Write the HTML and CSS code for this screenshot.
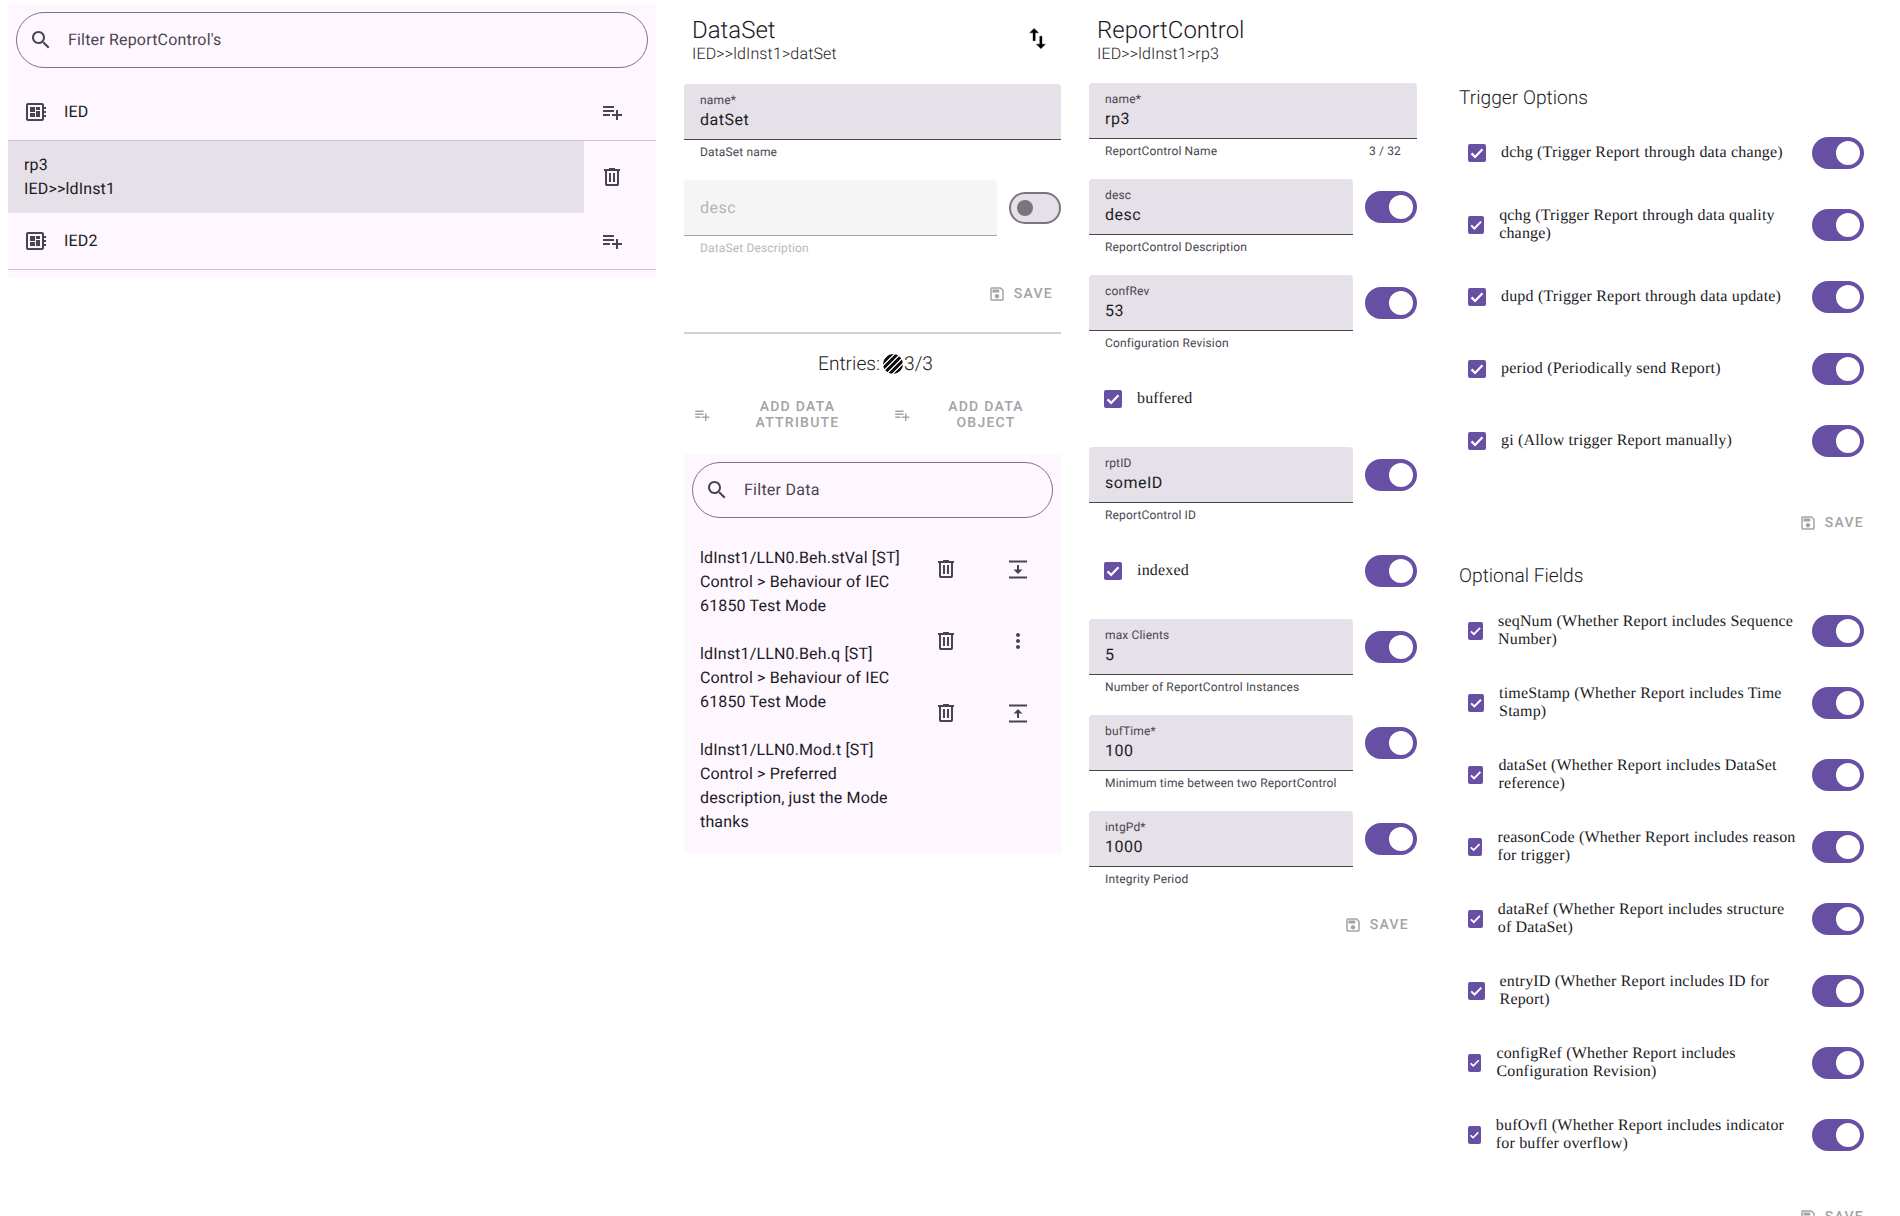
FILE: index.html
```html
<!DOCTYPE html>
<html lang="en">
<head>
<meta charset="UTF-8">
<meta name="viewport" content="width=device-width, initial-scale=1.0">
<title>ReportControl</title>
<link rel="stylesheet" href="styles.css">
</head>
<body>
<svg class="sprite" xmlns="http://www.w3.org/2000/svg">
    <symbol id="i-search" viewBox="0 0 24 24"><path d="M15.5 14h-.79l-.28-.27C15.41 12.59 16 11.11 16 9.5 16 5.91 13.09 3 9.5 3S3 5.91 3 9.5 5.91 16 9.5 16c1.61 0 3.09-.59 4.23-1.57l.27.28v.79l5 4.99L20.49 19l-4.99-5zm-6 0C7.01 14 5 11.99 5 9.5S7.01 5 9.5 5 14 7.01 14 9.5 11.99 14 9.5 14z"/></symbol>
    <symbol id="i-board" viewBox="0 0 24 24"><path d="M22 9V7h-2V5c0-1.1-.9-2-2-2H4c-1.1 0-2 .9-2 2v14c0 1.1.9 2 2 2h14c1.1 0 2-.9 2-2v-2h2v-2h-2v-2h2v-2h-2V9h2zm-4 10H4V5h14v14zM6 13h5v4H6zm6-6h4v3h-4zM6 7h5v5H6zm6 4h4v6h-4z"/></symbol>
    <symbol id="i-add" viewBox="0 0 24 24"><path d="M14 10H3v2h11v-2zm0-4H3v2h11V6zm4 8v-4h-2v4h-4v2h4v4h2v-4h4v-2h-4zM3 16h7v-2H3v2z"/></symbol>
    <symbol id="i-delete" viewBox="0 0 24 24"><path d="M7 21q-.825 0-1.412-.587Q5 19.825 5 19V6H4V4h5V3h6v1h5v2h-1v13q0 .825-.587 1.413Q17.825 21 17 21ZM17 6H7v13h10ZM9 17h2V8H9Zm4 0h2V8h-2Z"/></symbol>
    <symbol id="i-save" viewBox="0 0 24 24"><path d="M17 3H5c-1.11 0-2 .9-2 2v14c0 1.1.89 2 2 2h14c1.1 0 2-.9 2-2V7l-4-4zm2 16H5V5h11.17L19 7.83V19zm-7-7c-1.66 0-3 1.34-3 3s1.34 3 3 3 3-1.34 3-3-1.34-3-3-3zM6 6h9v4H6z"/></symbol>
    <symbol id="i-swap" viewBox="0 0 24 24"><path d="M16 17.01V10h-2v7.01h-3L15 21l4-3.99h-3zM9 3L5 6.99h3V14h2V6.99h3L9 3z"/></symbol>
    <symbol id="i-down" viewBox="0 0 24 24"><path d="M3 3.5h18v2H3zM3 19.5h18v2H3zM11 8h2v4.5h3.5L12 17l-4.5-4.5H11z"/></symbol>
    <symbol id="i-up" viewBox="0 0 24 24"><path d="M3 3.5h18v2H3zM3 19.5h18v2H3zM11 17h2v-4.5h3.5L12 8l-4.5 4.5H11z"/></symbol>
    <symbol id="i-more" viewBox="0 0 24 24"><path d="M12 8c1.1 0 2-.9 2-2s-.9-2-2-2-2 .9-2 2 .9 2 2 2zm0 2c-1.1 0-2 .9-2 2s.9 2 2 2 2-.9 2-2-.9-2-2-2zm0 6c-1.1 0-2 .9-2 2s.9 2 2 2 2-.9 2-2-.9-2-2-2z"/></symbol>
    <symbol id="i-check" viewBox="0 0 18 18"><path d="M3.5 9.4l3.6 3.5 7.4-7.6" fill="none" stroke="#fff" stroke-width="2.2"/></symbol>
</svg>

<div class="page">

    <!-- report control tree -->
    <section class="tree-col">
        <div class="panel">
            <div class="search">
                <svg class="icon"><use href="#i-search"/></svg>
                <span>Filter ReportControl's</span>
            </div>
            <div class="tree">
                <div class="tree-row">
                    <svg class="icon"><use href="#i-board"/></svg>
                    <span class="tree-name">IED</span>
                    <svg class="icon tree-action"><use href="#i-add"/></svg>
                </div>
                <div class="tree-row tree-row-sel">
                    <div class="tree-sel">rp3<br>IED&gt;&gt;ldInst1</div>
                    <svg class="icon tree-action"><use href="#i-delete"/></svg>
                </div>
                <div class="tree-row">
                    <svg class="icon"><use href="#i-board"/></svg>
                    <span class="tree-name">IED2</span>
                    <svg class="icon tree-action"><use href="#i-add"/></svg>
                </div>
            </div>
        </div>
    </section>

    <!-- dataset -->
    <section class="dataset-col">
        <header class="col-head">
            <div>
                <h1>DataSet</h1>
                <p>IED&gt;&gt;ldInst1&gt;datSet</p>
            </div>
            <svg class="icon swap"><use href="#i-swap"/></svg>
        </header>

        <div class="field-row">
            <div class="field">
                <div class="box"><span class="box-label">name*</span><span class="box-value">datSet</span></div>
                <div class="helper"><span>DataSet name</span></div>
            </div>
        </div>
        <div class="field-row">
            <div class="field field-off">
                <div class="box box-empty"><span class="box-value">desc</span></div>
                <div class="helper"><span>DataSet Description</span></div>
            </div>
            <span class="switch switch-off"></span>
        </div>

        <div class="save-row">
            <span class="save"><svg class="icon-sm"><use href="#i-save"/></svg>Save</span>
        </div>

        <hr class="rule">
        <div class="entries">Entries:<span class="hatch"></span>3/3</div>

        <div class="add-row">
            <div class="add-btn add-btn-first"><svg class="icon-sm"><use href="#i-add"/></svg><span>Add data<br>attribute</span></div>
            <div class="add-btn"><svg class="icon-sm"><use href="#i-add"/></svg><span>Add data<br>object</span></div>
        </div>

        <div class="panel data-panel">
            <div class="search">
                <svg class="icon"><use href="#i-search"/></svg>
                <span>Filter Data</span>
            </div>
            <div class="data-list">
                <div class="data-text">
                    <p>ldInst1/LLN0.Beh.stVal [ST]<br>Control &gt; Behaviour of IEC 61850 Test Mode</p>
                    <p>ldInst1/LLN0.Beh.q [ST]<br>Control &gt; Behaviour of IEC 61850 Test Mode</p>
                    <p>ldInst1/LLN0.Mod.t [ST]<br>Control &gt; Preferred description, just the Mode thanks</p>
                </div>
                <div class="data-actions">
                    <svg class="icon"><use href="#i-delete"/></svg>
                    <svg class="icon"><use href="#i-down"/></svg>
                    <svg class="icon"><use href="#i-delete"/></svg>
                    <svg class="icon"><use href="#i-more"/></svg>
                    <svg class="icon"><use href="#i-delete"/></svg>
                    <svg class="icon"><use href="#i-up"/></svg>
                </div>
            </div>
        </div>
    </section>

    <!-- report control attributes -->
    <section class="report-col">
        <header class="col-head col-head-report">
            <div>
                <h1>ReportControl</h1>
                <p>IED&gt;&gt;ldInst1&gt;rp3</p>
            </div>
        </header>

        <div class="field-row">
            <div class="field">
                <div class="box"><span class="box-label">name*</span><span class="box-value">rp3</span></div>
                <div class="helper"><span>ReportControl Name</span><span>3 / 32</span></div>
            </div>
        </div>
        <div class="field-row">
            <div class="field">
                <div class="box"><span class="box-label">desc</span><span class="box-value">desc</span></div>
                <div class="helper"><span>ReportControl Description</span></div>
            </div>
            <span class="switch"></span>
        </div>
        <div class="field-row">
            <div class="field">
                <div class="box"><span class="box-label">confRev</span><span class="box-value">53</span></div>
                <div class="helper"><span>Configuration Revision</span></div>
            </div>
            <span class="switch"></span>
        </div>
        <div class="check-row">
            <label class="form-field"><span class="checkbox"><svg><use href="#i-check"/></svg></span><span class="form-label">buffered</span></label>
        </div>
        <div class="field-row">
            <div class="field">
                <div class="box"><span class="box-label">rptID</span><span class="box-value">someID</span></div>
                <div class="helper"><span>ReportControl ID</span></div>
            </div>
            <span class="switch"></span>
        </div>
        <div class="check-row">
            <label class="form-field"><span class="checkbox"><svg><use href="#i-check"/></svg></span><span class="form-label">indexed</span></label>
            <span class="switch"></span>
        </div>
        <div class="field-row">
            <div class="field">
                <div class="box"><span class="box-label">max Clients</span><span class="box-value">5</span></div>
                <div class="helper"><span>Number of ReportControl Instances</span></div>
            </div>
            <span class="switch"></span>
        </div>
        <div class="field-row">
            <div class="field">
                <div class="box"><span class="box-label">bufTime*</span><span class="box-value">100</span></div>
                <div class="helper"><span>Minimum time between two ReportControl</span></div>
            </div>
            <span class="switch"></span>
        </div>
        <div class="field-row">
            <div class="field">
                <div class="box"><span class="box-label">intgPd*</span><span class="box-value">1000</span></div>
                <div class="helper"><span>Integrity Period</span></div>
            </div>
            <span class="switch"></span>
        </div>
        <div class="save-row">
            <span class="save"><svg class="icon-sm"><use href="#i-save"/></svg>Save</span>
        </div>
    </section>

    <!-- trigger options and optional fields -->
    <section class="options-col">
        <h2 class="first">Trigger Options</h2>
        <div class="opt-row"><label class="form-field"><span class="checkbox"><svg><use href="#i-check"/></svg></span><span class="form-label">dchg (Trigger Report through data change)</span></label><span class="switch"></span></div>
        <div class="opt-row"><label class="form-field"><span class="checkbox"><svg><use href="#i-check"/></svg></span><span class="form-label">qchg (Trigger Report through data quality change)</span></label><span class="switch"></span></div>
        <div class="opt-row"><label class="form-field"><span class="checkbox"><svg><use href="#i-check"/></svg></span><span class="form-label">dupd (Trigger Report through data update)</span></label><span class="switch"></span></div>
        <div class="opt-row"><label class="form-field"><span class="checkbox"><svg><use href="#i-check"/></svg></span><span class="form-label">period (Periodically send Report)</span></label><span class="switch"></span></div>
        <div class="opt-row"><label class="form-field"><span class="checkbox"><svg><use href="#i-check"/></svg></span><span class="form-label">gi (Allow trigger Report manually)</span></label><span class="switch"></span></div>
        <div class="save-row opt-save">
            <span class="save"><svg class="icon-sm"><use href="#i-save"/></svg>Save</span>
        </div>

        <h2>Optional Fields</h2>
        <div class="opt-row"><label class="form-field"><span class="checkbox"><svg><use href="#i-check"/></svg></span><span class="form-label">seqNum (Whether Report includes Sequence Number)</span></label><span class="switch"></span></div>
        <div class="opt-row"><label class="form-field"><span class="checkbox"><svg><use href="#i-check"/></svg></span><span class="form-label">timeStamp (Whether Report includes Time Stamp)</span></label><span class="switch"></span></div>
        <div class="opt-row"><label class="form-field"><span class="checkbox"><svg><use href="#i-check"/></svg></span><span class="form-label">dataSet (Whether Report includes DataSet reference)</span></label><span class="switch"></span></div>
        <div class="opt-row"><label class="form-field"><span class="checkbox"><svg><use href="#i-check"/></svg></span><span class="form-label">reasonCode (Whether Report includes reason for trigger)</span></label><span class="switch"></span></div>
        <div class="opt-row"><label class="form-field"><span class="checkbox"><svg><use href="#i-check"/></svg></span><span class="form-label">dataRef (Whether Report includes structure of DataSet)</span></label><span class="switch"></span></div>
        <div class="opt-row"><label class="form-field"><span class="checkbox"><svg><use href="#i-check"/></svg></span><span class="form-label">entryID (Whether Report includes ID for Report)</span></label><span class="switch"></span></div>
        <div class="opt-row"><label class="form-field"><span class="checkbox"><svg><use href="#i-check"/></svg></span><span class="form-label">configRef (Whether Report includes Configuration Revision)</span></label><span class="switch"></span></div>
        <div class="opt-row"><label class="form-field"><span class="checkbox"><svg><use href="#i-check"/></svg></span><span class="form-label">bufOvfl (Whether Report includes indicator for buffer overflow)</span></label><span class="switch"></span></div>
        <div class="save-row opt-save">
            <span class="save"><svg class="icon-sm"><use href="#i-save"/></svg>Save</span>
        </div>
    </section>

</div>
</body>
</html>
```

FILE: styles.css
```css
html{
overflow: hidden;
}

body{
margin: 0;
background: #fff;
color: #1c1b1f;
font-family: Roboto, "Liberation Sans", sans-serif;
font-size: 16px;
line-height: 24px;
letter-spacing: 0.15px;
text-rendering: geometricPrecision;
}

.sprite{
display: none;
}

.page{
display: flex;
align-items: flex-start;
padding: 4px 0 0 8px;
}

.icon{
width: 24px;
height: 24px;
flex: none;
fill: #49454f;
}

.icon-sm{
width: 18px;
height: 18px;
flex: none;
fill: currentColor;
}

/* columns */
.tree-col{
width: 648px;
flex: none;
}

.dataset-col{
width: 377px;
flex: none;
margin-left: 28px;
}

.report-col{
width: 328px;
flex: none;
margin-left: 28px;
}

.options-col{
width: 406px;
flex: none;
margin-left: 41px;
}

/* panels and search */
.panel{
background: #fef7ff;
padding: 8px;
}

.search{
height: 56px;
box-sizing: border-box;
display: flex;
align-items: center;
gap: 15px;
padding-left: 12px;
border: 1px solid #79747e;
border-radius: 28px;
color: #49454f;
letter-spacing: 0.25px;
}

.tree-col .panel{
padding: 8px 0;
}

.tree-col .search{
margin: 0 8px;
letter-spacing: 0.18px;
}

/* tree */
.tree{
padding-top: 16px;
}

.tree-row{
height: 57px;
box-sizing: border-box;
display: flex;
align-items: center;
gap: 16px;
padding: 0 32px 0 16px;
border-bottom: 1px solid #cac4d0;
}

.tree-name{
flex: 1;
}

.tree-row-sel{
height: 72px;
padding: 0 32px 0 0;
border-bottom: none;
}

.tree-sel{
width: 576px;
height: 72px;
box-sizing: border-box;
padding: 12px 0 0 16px;
background: #e6e1e8;
}

.tree-action{
margin: -1px 0 0 auto;
}

/* column header */
.col-head{
height: 60px;
box-sizing: border-box;
display: flex;
justify-content: space-between;
align-items: center;
padding: 10px 10px 0 8px;
margin-bottom: 20px;
}

.col-head-report{
margin-bottom: 19px;
}

.col-head h1{
margin: 1px 0 -1px;
font-size: 24px;
font-weight: 300;
line-height: 29px;
letter-spacing: 0;
}

.col-head p{
margin: 0;
font-weight: 300;
line-height: 20px;
}

.swap{
width: 27px;
height: 27px;
margin-top: -2px;
fill: #000;
stroke: #000;
stroke-width: 0.3;
}

/* text fields */
.field-row{
display: flex;
gap: 12px;
margin-bottom: 20px;
}

.field{
flex: 1;
min-width: 0;
}

.box{
height: 56px;
box-sizing: border-box;
display: flex;
flex-direction: column;
padding: 8px 16px 0;
background: #e6e0e9;
border-bottom: 1px solid #49454f;
border-radius: 4px 4px 0 0;
}

.box-label{
font-size: 12px;
line-height: 16px;
letter-spacing: 0.15px;
color: #49454f;
}

.box-value{
line-height: 24px;
letter-spacing: 0.5px;
}

.box-empty{
justify-content: center;
padding-top: 0;
}

.helper{
display: flex;
justify-content: space-between;
padding: 4px 16px 0;
font-size: 12px;
line-height: 16px;
letter-spacing: 0.15px;
white-space: nowrap;
color: #49454f;
}

.field-off .box{
background: #f5f5f6;
border-bottom-color: #a4a2a6;
}

.field-off .box-value{
color: #b3b2b4;
}

.field-off .helper{
color: #b9b8ba;
}

/* switch */
.switch{
width: 52px;
height: 32px;
flex: none;
box-sizing: border-box;
align-self: flex-start;
margin-top: 12px;
display: flex;
align-items: center;
justify-content: flex-end;
padding-right: 4px;
background: #6750a4;
border-radius: 16px;
}

.switch::after{
content: "";
width: 24px;
height: 24px;
background: #fff;
border-radius: 50%;
}

.switch-off{
justify-content: flex-start;
padding: 0 0 0 6px;
background: #e6e0e9;
border: 2px solid #79747e;
}

.switch-off::after{
width: 16px;
height: 16px;
background: #79747e;
}

/* checkbox with label */
.check-row{
height: 56px;
display: flex;
justify-content: space-between;
align-items: center;
margin-bottom: 20px;
}

.form-field{
display: flex;
align-items: center;
padding-left: 4px;
font-family: "Liberation Serif", serif;
line-height: 18px;
letter-spacing: 0.18px;
}

.checkbox{
flex: 0 1 40px;
min-width: 0;
height: 18px;
box-sizing: border-box;
padding: 0 11px;
display: flex;
}

.checkbox svg{
width: 100%;
height: 18px;
display: block;
background: #6750a4;
border-radius: 2px;
}

.form-label{
flex: 0 1 auto;
padding-left: 4px;
margin-top: -1px;
}

/* save buttons */
.save-row{
height: 36px;
display: flex;
justify-content: flex-end;
align-items: center;
margin-bottom: 20px;
padding-right: 8px;
}

.save{
display: flex;
align-items: center;
gap: 8px;
font-size: 14px;
font-weight: 500;
letter-spacing: 1.25px;
text-transform: uppercase;
color: #a4a3a5;
}

.rule{
height: 2px;
margin: 0;
border: none;
background: #d2d1d3;
}

.entries{
display: flex;
justify-content: center;
align-items: center;
height: 28px;
margin-top: 16px;
padding-left: 6px;
font-size: 19.2px;
font-weight: 300;
letter-spacing: 0;
}

.hatch{
width: 20px;
height: 20px;
margin: 0 1px 0 3px;
border-radius: 50%;
background: repeating-linear-gradient(135deg, #111 0, #111 3px, #ddd 3px, #ddd 4.3px);
}

/* add buttons */
.add-row{
display: flex;
height: 36px;
margin-top: 19px;
margin-bottom: 21px;
}

.add-btn{
flex: 1;
display: flex;
align-items: center;
gap: 8px;
padding: 0 8px 0 9px;
font-size: 14px;
font-weight: 500;
line-height: 16px;
letter-spacing: 1.25px;
text-transform: uppercase;
text-align: center;
color: #a4a3a5;
}

.add-btn span{
flex: 1;
}

.add-btn-first{
flex: 0 0 200px;
box-sizing: border-box;
}

/* data list */
.data-panel{
padding-bottom: 20px;
}

.data-list{
display: flex;
margin-top: 28px;
}

.data-text{
width: 205.5px;
flex: none;
margin: 0 16px 0 8px;
}

.data-text p{
margin: 0 0 24px;
color: #1c1b1f;
}

.data-text p:last-child{
margin-bottom: 0;
}

.data-actions{
display: grid;
grid-template-columns: 48px 48px;
grid-auto-rows: 48px;
gap: 24px;
justify-items: center;
align-items: center;
margin-top: -1px;
}

/* options */
h2{
margin: 21px 0 5px;
padding-left: 1px;
font-size: 19.2px;
font-weight: 300;
line-height: 28px;
letter-spacing: 0;
}

h2.first{
margin-top: 80px;
}

.opt-row{
height: 72px;
display: flex;
justify-content: space-between;
align-items: center;
}

.opt-row .form-field{
width: 340px;
box-sizing: border-box;
padding-left: 0;
margin-left: -1px;
}

.opt-row .switch{
align-self: center;
margin: 0;
}

.opt-save{
margin: 28px 0 0;
padding-right: 0;
}
```
